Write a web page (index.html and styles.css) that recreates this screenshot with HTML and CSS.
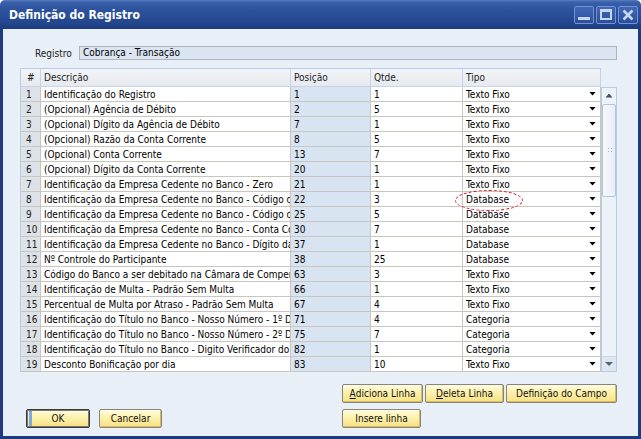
FILE: index.html
```html
<!DOCTYPE html>
<html lang="pt-BR">
<head>
<meta charset="utf-8">
<title>Definição do Registro</title>
<link rel="stylesheet" href="styles.css">
</head>
<body>
<div class="window">
  <div class="titlebar">
    <span class="title">Definição do Registro</span>
    <div class="caption-btns">
      <span class="cbtn"><svg width="18" height="16" viewBox="0 0 18 16"><rect x="3" y="10" width="12" height="3" fill="#c6d6f6"/></svg></span>
      <span class="cbtn"><svg width="18" height="16" viewBox="0 0 18 16"><path d="M3 2h12v11H3z M5 5v6h8V5z" fill="#c6d6f6" fill-rule="evenodd"/></svg></span>
      <span class="cbtn"><svg width="18" height="16" viewBox="0 0 18 16"><path d="M4.5 3.5l9 9M13.5 3.5l-9 9" stroke="#c6d6f6" stroke-width="2.6"/></svg></span>
    </div>
  </div>
  <div class="body">
    <div class="reg-row">
      <span class="reg-label">Registro</span>
      <div class="reg-field">Cobrança - Transação</div>
    </div>
    <div class="grid-area">
      <div class="grid">
        <div class="row head"><div class="c num">#</div><div class="c">Descrição</div><div class="c">Posição</div><div class="c">Qtde.</div><div class="c">Tipo</div></div>
        <div class="row"><div class="c num">1</div><div class="c desc">Identificação do Registro</div><div class="c pos">1</div><div class="c">1</div><div class="c tipo">Texto Fixo</div></div>
        <div class="row"><div class="c num">2</div><div class="c desc">(Opcional) Agência de Débito</div><div class="c pos">2</div><div class="c">5</div><div class="c tipo">Texto Fixo</div></div>
        <div class="row"><div class="c num">3</div><div class="c desc">(Opcional) Dígito da Agência de Débito</div><div class="c pos">7</div><div class="c">1</div><div class="c tipo">Texto Fixo</div></div>
        <div class="row"><div class="c num">4</div><div class="c desc">(Opcional) Razão da Conta Corrente</div><div class="c pos">8</div><div class="c">5</div><div class="c tipo">Texto Fixo</div></div>
        <div class="row"><div class="c num">5</div><div class="c desc">(Opcional) Conta Corrente</div><div class="c pos">13</div><div class="c">7</div><div class="c tipo">Texto Fixo</div></div>
        <div class="row"><div class="c num">6</div><div class="c desc">(Opcional) Dígito da Conta Corrente</div><div class="c pos">20</div><div class="c">1</div><div class="c tipo">Texto Fixo</div></div>
        <div class="row"><div class="c num">7</div><div class="c desc">Identificação da Empresa Cedente no Banco - Zero</div><div class="c pos">21</div><div class="c">1</div><div class="c tipo">Texto Fixo</div></div>
        <div class="row"><div class="c num">8</div><div class="c desc">Identificação da Empresa Cedente no Banco - Código da Carteira</div><div class="c pos">22</div><div class="c">3</div><div class="c tipo">Database</div></div>
        <div class="row"><div class="c num">9</div><div class="c desc">Identificação da Empresa Cedente no Banco - Código da Agência</div><div class="c pos">25</div><div class="c">5</div><div class="c tipo">Database</div></div>
        <div class="row"><div class="c num">10</div><div class="c desc">Identificação da Empresa Cedente no Banco - Conta Corrente</div><div class="c pos">30</div><div class="c">7</div><div class="c tipo">Database</div></div>
        <div class="row"><div class="c num">11</div><div class="c desc">Identificação da Empresa Cedente no Banco - Dígito da Conta</div><div class="c pos">37</div><div class="c">1</div><div class="c tipo">Database</div></div>
        <div class="row"><div class="c num">12</div><div class="c desc">Nº Controle do Participante</div><div class="c pos">38</div><div class="c">25</div><div class="c tipo">Database</div></div>
        <div class="row"><div class="c num">13</div><div class="c desc">Código do Banco a ser debitado na Câmara de Compensação</div><div class="c pos">63</div><div class="c">3</div><div class="c tipo">Texto Fixo</div></div>
        <div class="row"><div class="c num">14</div><div class="c desc">Identificação de Multa - Padrão Sem Multa</div><div class="c pos">66</div><div class="c">1</div><div class="c tipo">Texto Fixo</div></div>
        <div class="row"><div class="c num">15</div><div class="c desc">Percentual de Multa por Atraso - Padrão Sem Multa</div><div class="c pos">67</div><div class="c">4</div><div class="c tipo">Texto Fixo</div></div>
        <div class="row"><div class="c num">16</div><div class="c desc">Identificação do Título no Banco - Nosso Número - 1º Dígito</div><div class="c pos">71</div><div class="c">4</div><div class="c tipo">Categoria</div></div>
        <div class="row"><div class="c num">17</div><div class="c desc">Identificação do Título no Banco - Nosso Número - 2º Dígito</div><div class="c pos">75</div><div class="c">7</div><div class="c tipo">Categoria</div></div>
        <div class="row"><div class="c num">18</div><div class="c desc">Identificação do Título no Banco - Digito Verificador do Nosso Número</div><div class="c pos">82</div><div class="c">1</div><div class="c tipo">Categoria</div></div>
        <div class="row"><div class="c num">19</div><div class="c desc">Desconto Bonificação por dia</div><div class="c pos">83</div><div class="c">10</div><div class="c tipo">Texto Fixo</div></div>
        <span class="mark"></span>
      </div>
      <div class="vscroll">
        <div class="sb-up"></div>
        <div class="sb-thumb"><span class="grip"></span></div>
        <div class="sb-track"></div>
        <div class="sb-down"></div>
      </div>
    </div>
    <div class="footer">
      <div class="left-btns">
        <span class="btn ok">OK</span>
        <span class="btn w-cancel">Cancelar</span>
      </div>
      <div class="right-btns">
        <div class="btn-row">
          <span class="btn w-add"><u>A</u>diciona Linha</span>
          <span class="btn w-del"><u>D</u>eleta Linha</span>
          <span class="btn w-def">Definição do Campo</span>
        </div>
        <div class="btn-row">
          <span class="btn w-ins">Insere linha</span>
        </div>
      </div>
    </div>
  </div>
</div>
</body>
</html>
```
FILE: styles.css
```css
* { box-sizing: border-box; }
html, body { margin: 0; padding: 0; }
body {
  width: 641px;
  height: 439px;
  overflow: hidden;
  background: #ffffff;
  font-family: "DejaVu Sans Condensed", "DejaVu Sans", sans-serif;
  font-stretch: condensed;
  font-size: 10px;
  color: #000;
}
.window {
  width: 641px;
  height: 439px;
  display: flex;
  flex-direction: column;
}
.titlebar {
  height: 29px;
  flex: none;
  display: flex;
  justify-content: space-between;
  align-items: flex-start;
  padding: 0 3px 0 9px;
  background: linear-gradient(#5a7ec2 0px, #3a61aa 2px, #2d529d 10px, #24488f 22px, #1c3b7d 29px);
  border-radius: 5px 5px 0 0;
}
.title {
  color: #fff;
  font-weight: bold;
  font-size: 12px;
  line-height: 29px;
  margin-top: 1px;
}
.caption-btns {
  display: flex;
  gap: 2px;
  margin-top: 6px;
}
.cbtn {
  width: 20px;
  height: 18px;
  border: 1px solid #7592d4;
  border-radius: 2px;
  background: linear-gradient(#4168b6, #2b4f9c);
  display: flex;
  align-items: center;
  justify-content: center;
}
.body {
  flex: 1;
  background: #e9eff7;
  border: 3px solid #1e3b7e;
  border-top: 0;
  padding: 17px 21px 0 17px;
  display: flex;
  flex-direction: column;
}
.reg-row {
  display: flex;
  align-items: center;
  height: 14px;
  padding-left: 15px;
}
.reg-label {
  width: 44px;
  color: #1a1a1a;
}
.reg-field {
  flex: 1;
  height: 14px;
  line-height: 12px;
  padding-left: 3px;
  background: #dbe5f1;
  border: 1px solid #acb4be;
}
.grid-area {
  display: flex;
  align-items: flex-start;
  margin-top: 8px;
}
.grid {
  position: relative;
  width: 581px;
  border-top: 1px solid #b8cce5;
  border-left: 1px solid #b8cce5;
}
.row {
  display: grid;
  grid-template-columns: 20px 250px 80px 92px 138px;
  height: 15px;
}
.c {
  height: 15px;
  padding: 1px 0 0 3px;
  line-height: 13px;
  white-space: nowrap;
  overflow: hidden;
  background: #fff;
  border-right: 1px solid #c9c7bd;
  border-bottom: 1px solid #c9c7bd;
}
.row.head { height: 18px; }
.row.head .c {
  height: 18px;
  line-height: 17px;
  padding-top: 0;
  background: linear-gradient(#f2f4f7, #e6e9ee);
  border-right: 1px solid #c4d5ea;
  border-bottom: 1px solid #c4d5ea;
  color: #222;
}
.row.head .c.num { padding-left: 6px; }
.c.num {
  padding-left: 5px;
  background: #dde1e8;
  color: #222;
}
.c.pos { background: #d9e4f2; }
.c.tipo {
  display: flex;
  justify-content: space-between;
  align-items: center;
  padding-right: 4px;
}
.c.tipo::after {
  content: "";
  width: 7px;
  height: 4px;
  margin-top: -2px;
  background: #000;
  clip-path: polygon(0 0, 100% 0, 50% 100%);
}
.mark {
  position: absolute;
  left: 434px;
  top: 121px;
  width: 68px;
  height: 21px;
  border: 1px dashed #e0141e;
  border-radius: 50%;
}
.vscroll {
  width: 16px;
  height: 285px;
  margin-top: 19px;
  margin-left: 0;
  border: 1px solid #b8cce5;
  background: #edf2f9;
  display: flex;
  flex-direction: column;
  align-items: center;
}
.sb-up {
  height: 15px;
  width: 100%;
  display: flex;
  justify-content: center;
  align-items: center;
}
.sb-up::before {
  content: "";
  width: 7px;
  height: 4px;
  background: #3f4d5c;
  clip-path: polygon(50% 0, 100% 100%, 0 100%);
}
.sb-thumb {
  width: 14px;
  height: 93px;
  margin-top: 1px;
  border: 1px solid #b3c5dc;
  border-radius: 2px;
  background: linear-gradient(to right, #f6f9fd, #e8eef6);
  display: flex;
  align-items: center;
  justify-content: center;
}
.grip {
  width: 5px;
  height: 7px;
  background:
    radial-gradient(circle, #9db1ca 0.8px, transparent 1px) 0 0 / 3px 3px;
}
.sb-track { flex: 1; }
.sb-down {
  height: 15px;
  width: 100%;
  background: #dfe6ef;
  border-top: 1px solid #ccd7e5;
  display: flex;
  justify-content: center;
  align-items: center;
}
.sb-down::before {
  content: "";
  width: 8px;
  height: 4px;
  background: #4f6578;
  clip-path: polygon(0 0, 100% 0, 50% 100%);
}
.footer {
  display: flex;
  justify-content: space-between;
  align-items: flex-end;
  margin-top: 12px;
}
.left-btns {
  display: flex;
  gap: 9px;
  margin-left: 6px;
}
.right-btns {
  display: flex;
  flex-direction: column;
  gap: 6px;
}
.btn-row {
  display: flex;
  gap: 2px;
}
.btn {
  display: flex;
  align-items: center;
  justify-content: center;
  height: 19px;
  border: 1px solid #85857d;
  border-radius: 2px;
  background: linear-gradient(#fffce2 0%, #fdf2b0 40%, #f8e084 100%);
  box-shadow: inset -1px -1px 0 #d8bc5c;
  color: #111;
  white-space: nowrap;
}
.btn u { text-decoration: underline; text-underline-offset: 1px; }
.btn.ok {
  width: 64px;
  border: 1px solid #3a3a3a;
  box-shadow: inset 0 0 0 1px #77776f;
  background:
    linear-gradient(to right, transparent 0 2px, #7fa9e2 2px 5px, transparent 5px),
    linear-gradient(#fffce2 0%, #fdf2b0 40%, #f8e084 100%);
}
.w-cancel { width: 63px; }
.w-add { width: 81px; }
.w-del { width: 79px; }
.w-def { width: 111px; }
.w-ins { width: 79px; }
```
